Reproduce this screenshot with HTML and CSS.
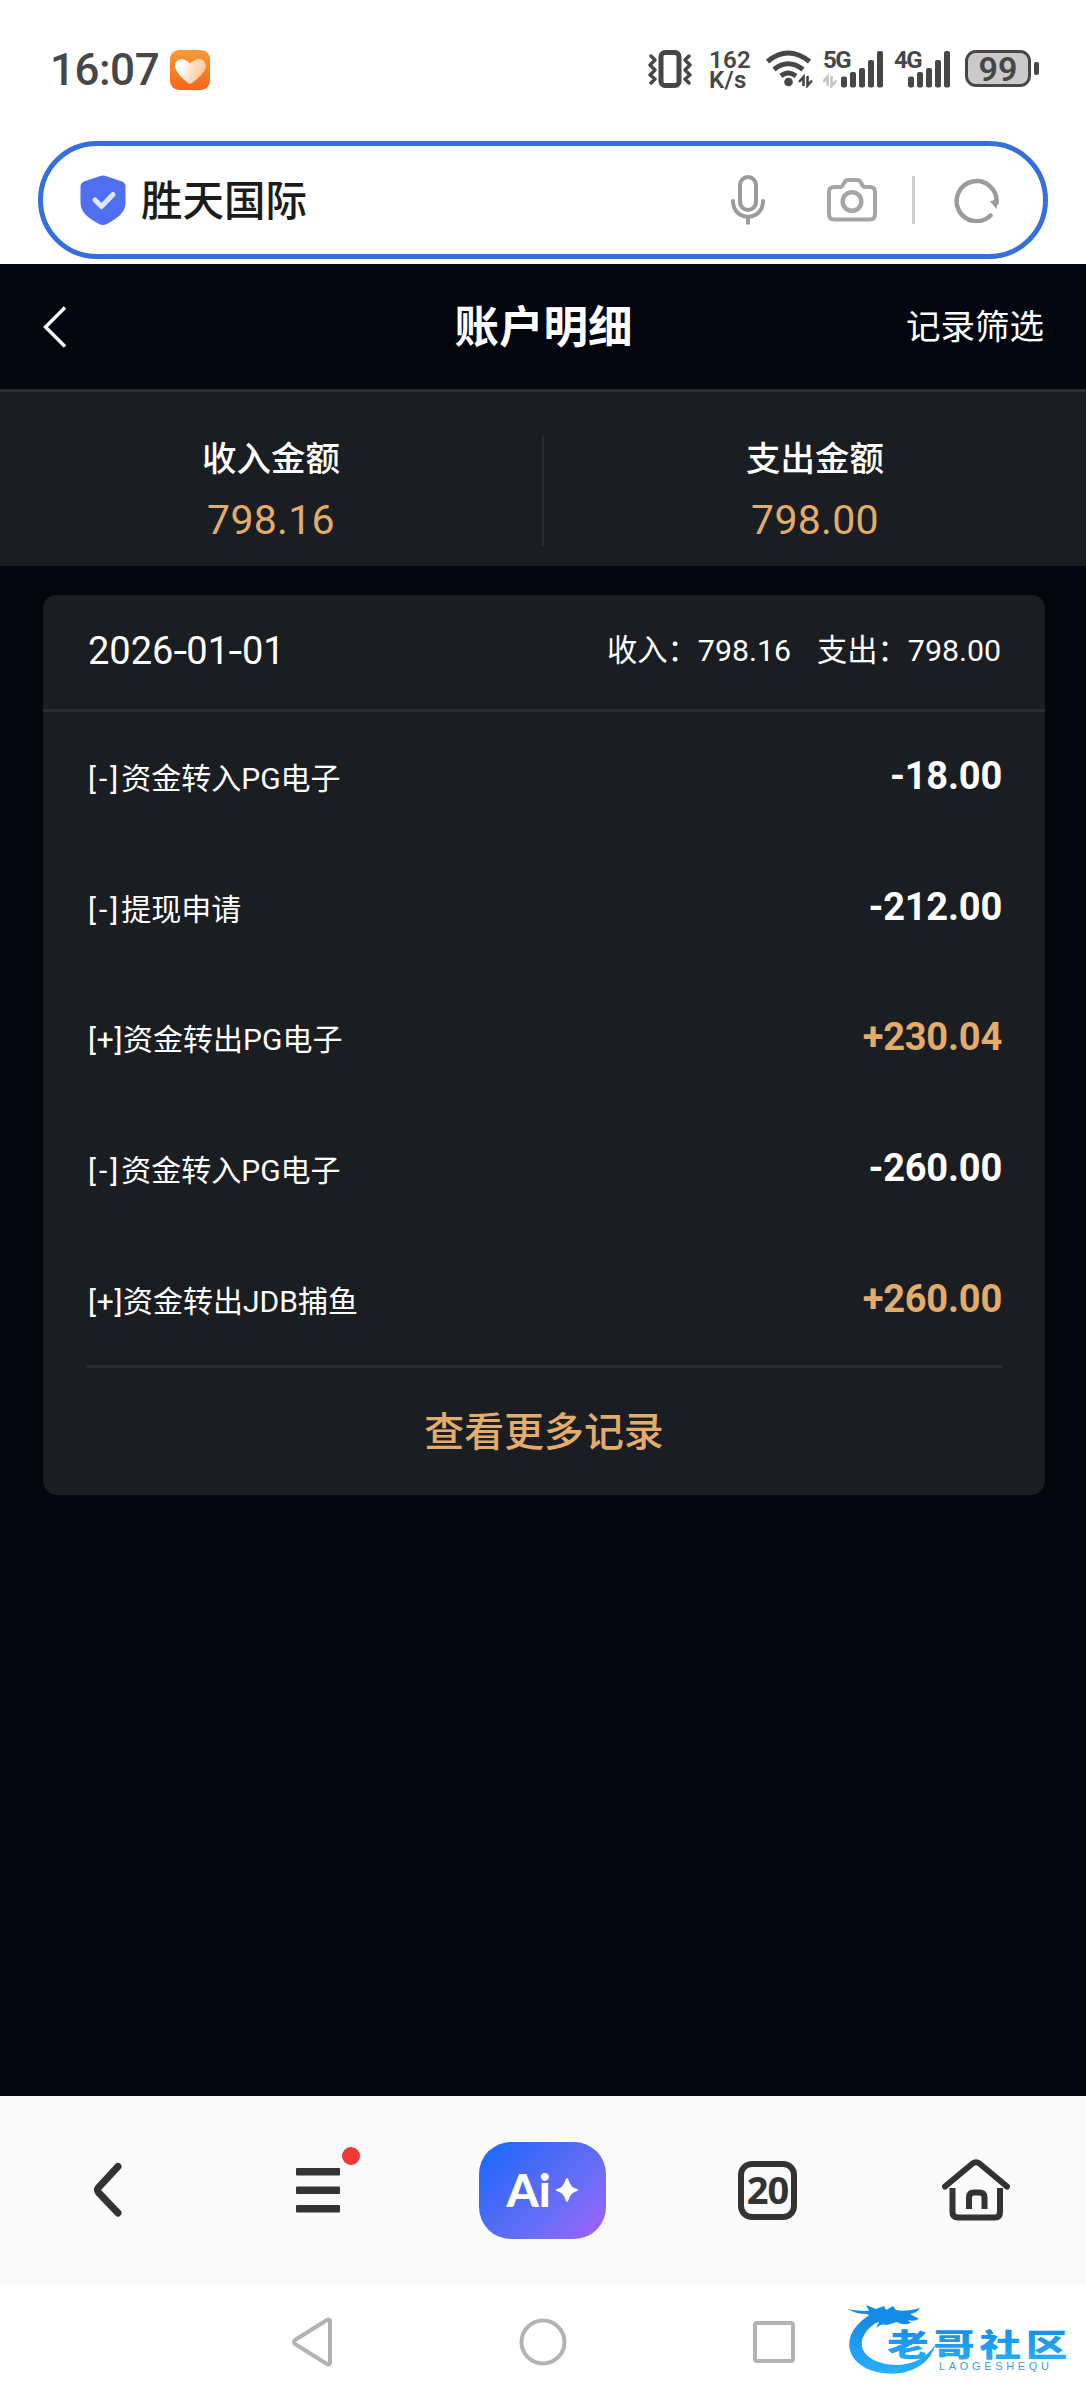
FILE: index.html
```html
<!DOCTYPE html>
<html lang="zh-CN">
<head>
<meta charset="utf-8">
<title>账户明细</title>
<link rel="stylesheet" href="styles.css">
</head>
<body>
<div class="phone">
  <header class="status">
    <span class="clock">16:07</span>
    <svg class="health" width="40" height="40" viewBox="0 0 40 40">
      <defs>
        <linearGradient id="hb" x1="0" y1="0" x2="0" y2="1"><stop offset="0" stop-color="#f99b35"/><stop offset="1" stop-color="#f8651c"/></linearGradient>
        <linearGradient id="hh" x1="0" y1="0" x2="1" y2=".3"><stop offset=".3" stop-color="#fff"/><stop offset=".6" stop-color="#ffe0c4"/><stop offset="1" stop-color="#ffc89c"/></linearGradient>
      </defs>
      <rect width="40" height="40" rx="9" fill="url(#hb)"/>
      <path d="M20 34C18 34 5 22 5 16.500C5 8 14 7 20 13.500C26 7 36 8 36 16.500C36 22 22 34 20 34Z" fill="url(#hh)"/>
    </svg>
    <div class="indicators">
      <svg class="vibrate" width="44" height="38" viewBox="0 0 44 38" fill="none" stroke="#474747">
        <rect x="13" y="2.500" width="18" height="33" rx="4" stroke-width="5"/>
        <path d="M3 6l4 4-5 5 5 5-5 5 5 4-4 4M41 6l-4 4 5 5-5 5 5 5-5 4 4 4" stroke-width="3.400" stroke-linejoin="round" stroke-linecap="round"/>
      </svg>
      <div class="speed"><span>162</span><span>K/s</span></div>
      <svg class="wifi" width="47" height="38" viewBox="0 0 47 38" fill="none" stroke="#474747" stroke-width="5">
        <path d="M1.500 11.500Q22 -5.500 43.500 11.500M8 19.500Q22 8 37 19.500M15 26Q22 20 30 26"/>
        <circle cx="22.500" cy="32" r="4.300" fill="#474747" stroke="none"/>
        <path d="M37.500 36V27l-4.500 5M41.500 26v9.500l4.500-5" stroke-width="2.600"/>
      </svg>
      <div class="net">
        <span class="gen">5G</span>
        <svg width="60" height="38" viewBox="0 0 60 38" fill="#474747">
          <path d="M4.500 36V27L0 32M8.500 26v10l5-5.500" fill="none" stroke="#c4c4c4" stroke-width="2.600"/>
          <rect x="18" y="26.500" width="6" height="11" rx="2"/><rect x="27" y="22" width="6" height="15.500" rx="2"/><rect x="36" y="18" width="6" height="19.500" rx="2"/><rect x="45" y="10" width="6" height="27.500" rx="2"/><rect x="54" y="1" width="6" height="36.500" rx="2"/>
        </svg>
      </div>
      <div class="net second">
        <span class="gen">4G</span>
        <svg width="56" height="38" viewBox="4 0 56 38" fill="#474747">
          <rect x="18" y="26.500" width="6" height="11" rx="2"/><rect x="27" y="22" width="6" height="15.500" rx="2"/><rect x="36" y="18" width="6" height="19.500" rx="2"/><rect x="45" y="10" width="6" height="27.500" rx="2"/><rect x="54" y="1" width="6" height="36.500" rx="2"/>
        </svg>
      </div>
      <div class="battery">99</div>
      <i class="nub"></i>
    </div>
  </header>

  <div class="search">
    <svg class="shield" width="46" height="50" viewBox="0 0 46 50">
      <path d="M19.500 1.200Q23 0 26.500 1.200L42 6.500Q45.500 8 45.500 11.500V28C45.500 38 36 44 27 49Q23 51 19 49C10 44 .5 38 .5 28V11.500Q.5 8 4 6.500Z" fill="#4f6ef2"/>
      <path d="M15 25l6.500 6.500L33 19.500" fill="none" stroke="#dfe6ff" stroke-width="5" stroke-linecap="round" stroke-linejoin="round"/>
    </svg>
    <span class="site">胜天国际</span>
    <svg class="mic" width="36" height="50" viewBox="0 0 36 50" fill="none" stroke="#9b9b9b" stroke-width="4">
      <rect x="10" y="2" width="16" height="33" rx="8"/><path d="M3 26c0 21 30 21 30 0" stroke-linecap="round"/><path d="M18 41.500v8"/>
    </svg>
    <svg class="camera" width="50" height="44" viewBox="0 0 50 44" fill="none" stroke="#a6a6a6" stroke-width="4">
      <path d="M7 9h6.500q2-.5 3-3l1.300-2Q18.500 2 21 2h9q2.500 0 3.500 2l1.500 2.500q1 2.500 3 2.500h5q5 0 5 5v22q0 5.500-5 5.500H7q-5 0-5-5.500V14q0-5 5-5Z"/><circle cx="25" cy="23.500" r="9.300" stroke-width="4.500"/>
    </svg>
    <i class="bar"></i>
    <svg class="reload" width="46" height="46" viewBox="0 0 46 46">
      <path d="M36.500 38.500A20 20 0 1 1 42.500 26" fill="none" stroke="#9b9b9b" stroke-width="4.500" stroke-linecap="round"/>
      <path d="M36 24.500l8.500-3L42.500 32Z" fill="#9b9b9b"/>
    </svg>
  </div>

  <main class="page">
    <div class="titlebar">
      <svg class="back" width="24" height="42" viewBox="0 0 24 42" fill="none" stroke="#fff" stroke-width="3.400"><path d="M22 1.500L2.500 21 22 40.500"/></svg>
      <h1>账户明细</h1>
      <span class="filter">记录筛选</span>
    </div>
    <section class="totals">
      <div class="total"><span class="label">收入金额</span><span class="value">798.16</span></div>
      <div class="total"><span class="label">支出金额</span><span class="value">798.00</span></div>
    </section>
    <section class="card">
      <div class="day"><span class="date">2026<span class="dash">-</span>01<span class="dash">-</span>01</span><span class="sum">收入：798.16</span><span class="sum out">支出：798.00</span></div>
      <ul class="rows">
        <li><span><span class="sign">[-]</span>资金转入PG电子</span><b>-18.00</b></li>
        <li><span><span class="sign">[-]</span>提现申请</span><b>-212.00</b></li>
        <li><span><span class="plus">[+]</span>资金转出PG电子</span><b class="in">+230.04</b></li>
        <li><span><span class="sign">[-]</span>资金转入PG电子</span><b>-260.00</b></li>
        <li><span><span class="plus">[+]</span>资金转出JDB捕鱼</span><b class="in">+260.00</b></li>
      </ul>
      <div class="more">查看更多记录</div>
    </section>
  </main>

  <nav class="toolbar">
    <svg width="30" height="56" viewBox="0 0 30 56" fill="none" stroke="#333" stroke-width="7" stroke-linecap="round" stroke-linejoin="round"><path d="M25 4.500L5.500 25.500Q3.500 28 5.500 30.500L25 51"/></svg>
    <div class="menu">
      <svg width="44" height="46" viewBox="0 0 44 46" fill="#333"><rect y="1" width="44" height="7.500" rx="1"/><rect y="19.500" width="44" height="7.500" rx="1"/><rect y="38" width="44" height="7.500" rx="1"/></svg>
      <i class="dot"></i>
    </div>
    <div class="ai"><span>Ai</span><svg width="24" height="26" viewBox="0 0 24 26"><path d="M12 1Q13 1 13.500 3Q15.500 10.500 22 12Q24.500 13 22 14Q15.500 15.500 13.500 23Q12 27 10.500 23Q8.500 15.500 2 14Q-.5 13 2 12Q8.500 10.500 10.500 3Q11 1 12 1Z" fill="#fff"/></svg></div>
    <div class="tabs">20</div>
    <svg width="68" height="62" viewBox="0 0 68 62" fill="none" stroke="#333" stroke-width="6"><path d="M3 27.500L30.500 4.500Q34 2 37.500 4.500L65 27.500" stroke-linecap="round"/><path d="M10.500 29v24q0 5.500 5.500 5.500h37q5 0 5-5.500V29"/><path d="M27 50V38.500q0-5 5-5h5.500q5 0 5 5V50"/></svg>
  </nav>

  <footer class="sysnav">
    <svg width="42" height="50" viewBox="0 0 42 50" fill="none" stroke="#b3b3b3" stroke-width="4" stroke-linejoin="round"><path d="M39 3.500v43Q38 48 36 47L4 27Q2 25 4 23L36 3Q38 2 39 3.500Z"/></svg>
    <svg width="48" height="48" viewBox="0 0 48 48" fill="none" stroke="#b3b3b3" stroke-width="4"><circle cx="24" cy="24" r="21.500"/></svg>
    <svg width="42" height="42" viewBox="0 0 42 42" fill="none" stroke="#b3b3b3" stroke-width="4"><rect x="2" y="2" width="38" height="38" rx="2"/></svg>
  </footer>

  <svg class="brand" width="226" height="84" viewBox="0 0 226 84">
    <defs><linearGradient id="bl" x1="0" y1="0" x2="0" y2="1"><stop offset="0" stop-color="#1486e2"/><stop offset="1" stop-color="#27b1fb"/></linearGradient></defs>
    <path d="M27 13C-4 29 -3 60 28 70C55 78 84 68 90 44C80 60 58 68 37 62C11 55 10 34 34 20Z" fill="url(#bl)"/>
    <path d="M3 8Q12 10 24 10L21 4L31 8L39 5L41 9L48 5L51 9Q62 11 75 7Q72 12 65 13L74 18Q69 21 63 19L66 22Q58 25 52 21L42 24Q36 22 31 27L34 21L26 23Q29 17 22 13Q10 13 3 8Z" fill="#138bea"/>
    <text class="brand-name" transform="translate(42 55) scale(1.34 1)" x="0 34.500 69 103.500" y="0" fill="url(#bl)">老哥社区</text>
    <text class="brand-sub" x="94" y="69" textLength="110">LAOGESHEQU</text>
  </svg>
</div>
</body>
</html>
```
FILE: styles.css
```css
* { box-sizing: border-box; }
body { margin: 0; background: #fff; }
svg { display: block; flex: none; }
.phone {
  position: relative;
  width: 1086px;
  height: 2400px;
  display: flex;
  flex-direction: column;
  overflow: hidden;
  font-family: Roboto, "Noto Sans CJK SC", sans-serif;
  color: #fff;
}

/* status bar */
.status {
  height: 141px;
  padding: 50px 47px 0 50px;
  display: flex;
  align-items: flex-start;
  color: #474747;
}
.clock { width: 120px; font-size: 44px; line-height: 40px; font-weight: 500; letter-spacing: -.5px; }
.indicators { margin-left: auto; display: flex; align-items: flex-start; height: 38px; }
.speed { margin-left: 17px; width: 42px; display: flex; flex-direction: column; font-size: 24px; line-height: 20px; font-weight: 600; letter-spacing: .3px; }
.wifi { margin-left: 15px; }
.net { position: relative; margin-left: 10px; }
.second { margin-left: 11px; }
.gen { position: absolute; left: 0; top: 0; font-size: 24px; line-height: 20px; font-weight: 700; letter-spacing: -1.500px; }
.battery {
  margin-left: 15px;
  width: 66px;
  height: 37px;
  border: 3px solid #474747;
  border-radius: 11px;
  background: #cacaca;
  font-size: 34px;
  line-height: 32px;
  font-weight: 600;
  text-align: center;
}
.nub { width: 5px; height: 13px; margin: 12px 0 0 3px; border-radius: 2px; background: #474747; }

/* address bar */
.search {
  flex: none;
  height: 118px;
  margin: 0 38px 5px;
  padding: 0 43px 0 37px;
  border: 5px solid #356fdd;
  border-radius: 59px;
  display: flex;
  align-items: center;
}
.site { margin: 3px 0 0 15px; font-size: 41.500px; line-height: 60px; font-weight: 500; color: #1c1c1c; }
.mic { margin-left: auto; margin-right: 61px; }
.camera { margin-right: 35px; }
.bar { width: 3px; height: 48px; margin-right: 39px; background: #cecece; }

/* account page */
.page { flex: none; height: 1832px; background: #03060e; }
.titlebar {
  height: 128px;
  padding: 0 42px 0 43px;
  border-bottom: 3px solid #2a2d32;
  display: grid;
  grid-template-columns: 1fr auto 1fr;
  align-items: center;
}
.titlebar h1 { margin: 2px 0 0; font-size: 44.500px; line-height: 60px; font-weight: 700; }
.filter { justify-self: end; font-size: 34.500px; line-height: 50px; }
.totals { height: 174px; background: #1a1d21; display: flex; padding-top: 44px; }
.total { flex: 1; height: 110px; display: flex; flex-direction: column; align-items: center; }
.total + .total { border-left: 2px solid #2a2d32; }
.label { font-size: 34.500px; line-height: 46px; font-weight: 500; }
.value { margin-top: 14px; font-size: 41px; line-height: 48px; letter-spacing: .3px; color: #e2ac6b; }
.card { width: 1002px; height: 900px; margin: 29px 0 0 43px; border-radius: 14px; background: #1a1d21; }
.day { height: 117px; padding: 0 44px 2px 45px; border-bottom: 3px solid #2a2d32; display: flex; align-items: center; }
.date { margin-right: auto; font-size: 38px; line-height: 50px; }
.dash { display: inline-block; transform: scaleX(1.3); margin: 0 1.200px; }
.sum { font-size: 30.300px; line-height: 44px; }
.out { margin-left: 26px; }
.rows { list-style: none; margin: 0 43px 0 44px; padding: 0; border-bottom: 3px solid #2a2d32; }
.rows li { height: 130.700px; padding: 0 0 3px 1px; display: flex; align-items: center; justify-content: space-between; font-size: 30px; }
.sign { letter-spacing: 3px; }
.plus { letter-spacing: .7px; }
.rows b { font-size: 38px; font-weight: 700; letter-spacing: -.2px; }
.rows .in { color: #e2ac6b; }
.more { height: 128px; line-height: 130px; text-align: center; font-size: 39.900px; font-weight: 500; color: #e2ac6b; }

/* browser toolbar */
.toolbar { flex: none; height: 188px; background: #fafafa; padding: 0 76px 0 93px; display: flex; align-items: center; }
.toolbar > :first-child { margin-right: 173px; }
.menu { position: relative; margin-right: 139px; }
.dot { position: absolute; left: 46px; top: -20px; width: 18px; height: 18px; border-radius: 50%; background: #ec3b36; }
.ai {
  width: 127px;
  height: 97px;
  margin-right: 132px;
  border-radius: 32px;
  background: linear-gradient(135deg, #1f69ff 8%, #4a6af4 38%, #6e6ef8 68%, #9d62ff 96%);
  display: flex;
  align-items: center;
  justify-content: center;
  font: 900 46px/60px Lato, sans-serif;
}
.ai svg { margin-left: 4px; }
.tabs { width: 59px; height: 59px; margin-right: auto; border: 6px solid #333; border-radius: 14px; color: #333; text-align: center; font: 700 38px/45px "Noto Sans", sans-serif; letter-spacing: -1px; }

/* system navigation */
.sysnav { flex: none; height: 116px; padding: 0 291px; display: flex; align-items: center; justify-content: space-between; background: #fff; }

.brand { position: absolute; left: 845px; top: 2301px; }
.brand-name { font: 900 31px "Noto Sans CJK SC", sans-serif; }
.brand-sub { font: 11px "Liberation Sans", sans-serif; fill: #3f9ddd; }
```
